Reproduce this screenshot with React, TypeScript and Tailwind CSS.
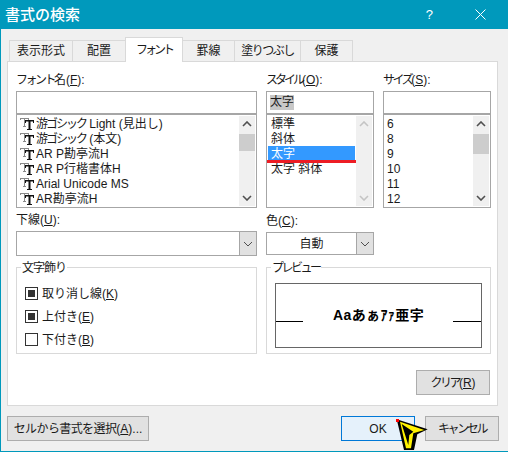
const fonts: [string, string][] = [
  ["游ゴシック", " Light (見出し)"],
  ["游ゴシック", " (本文)"],
  ["", "AR P勘亭流H"],
  ["", "AR P行楷書体H"],
  ["", "Arial Unicode MS"],
  ["", "AR勘亭流H"],
];
const styles = ["標準", "斜体", "太字", "太字 斜体"];
const sizes = ["6", "8", "9", "10", "11", "12"];

const Chevron = ({ down, color = "#505050", thin }: { down?: boolean; color?: string; thin?: boolean }) => (
  <svg width="10" height="6" viewBox="0 0 10 6" fill="none">
    <path d={down ? "M1 1l4 4 4-4" : "M1 5l4-4 4 4"} stroke={color} strokeWidth={thin ? 1 : 1.6} />
  </svg>
);

const FontIcon = () => (
  <svg width="14" height="12" viewBox="0 0 14 12" className="shrink-0">
    <path d="M0 0h9v2H8V1H5v7h1v1H3V8h1V1H1v1H0z" fill="#8a8a8a" />
    <path d="M5 2h9v3h-1V3.5h-2.5V11H12v1H7v-1h1.5V3.5H6V5H5z" fill="#111111" />
  </svg>
);

const Scrollbar = ({ thumb, disabled }: { thumb?: number; disabled?: boolean }) => (
  <div className="absolute right-px top-px bottom-px w-[16px] bg-[#f0f0f0] flex flex-col items-center justify-between py-[5px]">
    <Chevron color={disabled ? "#c4c4c4" : "#505050"} />
    {thumb ? <div className="absolute left-0 right-0 top-[18px] bg-[#cdcdcd]" style={{ height: thumb }} /> : null}
    <Chevron down color={disabled ? "#c4c4c4" : "#505050"} />
  </div>
);

const Tab = ({ w, active, children }: { w: number; active?: boolean; children: React.ReactNode }) => (
  <div
    className={
      active
        ? "relative z-10 -mb-px h-[25px] bg-white border border-b-0 border-[#d9d9d9] -ml-px flex items-center justify-center"
        : "h-[21px] bg-[#f0f0f0] border border-b-0 border-[#d9d9d9] -ml-px flex items-center justify-center"
    }
    style={{ width: w }}
  >
    {children}
  </div>
);

const Check = ({ checked, children }: { checked?: boolean; children: React.ReactNode }) => (
  <div className="flex items-center h-[13px] gap-[4px]">
    <div className="w-[13px] h-[13px] border border-[#333333] bg-white flex items-center justify-center">
      {checked ? <div className="w-[7px] h-[7px] bg-[#333333]" /> : null}
    </div>
    <span className="whitespace-nowrap mt-[2px]">{children}</span>
  </div>
);

const Combo = ({ h, children }: { h: string; children?: React.ReactNode }) => (
  <div className={`${h} border border-[#a6a6a6] bg-white flex`}>
    <div className="flex-1 flex items-center justify-center pt-px">{children}</div>
    <div className="w-[17px] bg-[#e1e1e1] border-l border-[#a6a6a6] flex items-center justify-center">
      <Chevron down thin />
    </div>
  </div>
);

const Btn = ({ w, primary, children }: { w: string; primary?: boolean; children: React.ReactNode }) => (
  <div
    className={`${w} h-[25px] pt-px border flex items-center justify-center ${
      primary ? "bg-[#e5f1fb] border-[#0078d7]" : "bg-[#e1e1e1] border-[#adadad]"
    }`}
  >
    {children}
  </div>
);

const App = () => {
  return (
    <div
      className="relative w-[508px] h-[452px] overflow-hidden bg-[#0099bc] border-l border-b border-[#0099bc] text-[12px] leading-[15px] text-[#1a1a1a]"
      style={{ fontFamily: '"Liberation Sans", "Noto Sans CJK JP", sans-serif' }}
    >
      <div className="h-[29px] flex items-center justify-between text-white">
        <span className="ml-[4px] text-[15px] font-medium">書式の検索</span>
        <div className="flex items-center">
          <span className="text-[13px] mr-[42px]">?</span>
          <svg width="11" height="11" viewBox="0 0 11 11" className="mr-[22px]" fill="none" stroke="#ffffff">
            <path d="M0.5 0.5l10 10M10.5 0.5l-10 10" />
          </svg>
        </div>
      </div>

      <div className="h-[422px] bg-[#f0f0f0] pl-[6px] pt-[8px]">
        <div className="flex items-end h-[24px] pl-[3px]">
          <Tab w={64}>表示形式</Tab>
          <Tab w={54}>配置</Tab>
          <Tab w={58} active><span className="tracking-[-3px]">フォント</span></Tab>
          <Tab w={53}>罫線</Tab>
          <Tab w={67}><span className="tracking-[-1.5px]">塗りつぶし</span></Tab>
          <Tab w={53}>保護</Tab>
        </div>

        <div className="w-[491px] h-[345px] bg-white border border-[#d9d9d9] pl-[8px] pt-[9px]">
          <div className="grid grid-cols-[241px_108px_108px] gap-x-[9px]">
            <label className="h-[20px] leading-[18px]"><span className="tracking-[-2.5px]">フォント</span>名(<span className="underline">F</span>):</label>
            <label className="h-[20px] leading-[18px]"><span className="tracking-[-3px]">スタイル</span>(<span className="underline">O</span>):</label>
            <label className="h-[20px] leading-[18px]"><span className="tracking-[-2.5px]">サイズ</span>(<span className="underline">S</span>):</label>

            <div className="h-[23px] border border-[#a6a6a6]" />
            <div className="h-[23px] border border-[#a6a6a6] flex items-center pl-[3px]">
              <span className="bg-[#c8c8c8]">太字</span>
            </div>
            <div className="h-[23px] border border-[#a6a6a6]" />

            <div className="relative h-[94px] border border-[#a6a6a6] pl-[3px] pt-[1px]">
              {fonts.map(([kana, rest]) => (
                <div key={kana + rest} className="flex items-center h-[15px] gap-[2px] whitespace-pre">
                  <FontIcon />
                  <span className="mt-[2px]">
                    {kana ? <span className="tracking-[-2px]">{kana}</span> : null}
                    {rest}
                  </span>
                </div>
              ))}
              <Scrollbar thumb={17} />
            </div>

            <div className="relative h-[94px] border border-[#a6a6a6] pl-px pt-[1px]">
              {styles.map((s) => (
                <div
                  key={s}
                  className={
                    s === "太字"
                      ? "w-[87px] h-[15px] leading-[17px] pl-[3px] bg-[#3399ff] text-white"
                      : "h-[15px] leading-[17px] pl-[3px]"
                  }
                >
                  {s}
                </div>
              ))}
              <div className="absolute left-0 top-[45px] w-[91px] h-[3px] bg-[#ed1c24]" />
              <Scrollbar disabled />
            </div>

            <div className="relative h-[94px] border border-[#a6a6a6] pl-[3px] pt-[1px]">
              {sizes.map((s) => (
                <div key={s} className="h-[15px] leading-[17px]">{s}</div>
              ))}
              <Scrollbar thumb={20} />
            </div>
          </div>

          <div className="flex gap-x-[9px] mt-[4px]">
            <div className="w-[241px]">
              <label className="block h-[19px] leading-[17px]">下線(<span className="underline">U</span>):</label>
              <Combo h="h-[25px]" />
            </div>
            <div className="w-[108px]">
              <label className="block h-[20px] leading-[18px]">色(<span className="underline">C</span>):</label>
              <Combo h="h-[23px]">自動</Combo>
            </div>
          </div>

          <div className="flex gap-x-[9px] mt-[3px]">
            <fieldset className="w-[241px] h-[95px] border border-[#d9d9d9] pl-[8px] pt-[12px] flex flex-col gap-[10px]">
              <legend className="ml-[-4px] px-px pt-[2px] leading-[14px]"><span className="tracking-[-1px]">文字飾り</span></legend>
              <Check checked>取り消し線(<span className="underline">K</span>)</Check>
              <Check checked>上付き(<span className="underline">E</span>)</Check>
              <Check>下付き(<span className="underline">B</span>)</Check>
            </fieldset>
            <fieldset className="w-[225px] h-[95px] border border-[#d9d9d9] pl-[8px] pt-[8px]">
              <legend className="ml-[-4px] px-px pt-[2px] leading-[14px]"><span className="tracking-[-2.5px]">プレビュー</span></legend>
              <div className="relative w-[207px] h-[65px] border border-[#666666] flex items-center justify-center font-bold text-[14px] text-black">
                <span className="whitespace-nowrap tracking-[0.4px]">Aaあぁｱｧ亜宇</span>
                <div className="absolute left-0 top-[37px] w-[27px] h-px bg-black" />
                <div className="absolute right-0 top-[37px] w-[28px] h-px bg-black" />
              </div>
            </fieldset>
          </div>

          <div className="flex justify-end pr-[7px] mt-[16px]">
            <Btn w="w-[74px]"><span><span className="tracking-[-2.5px]">クリア</span>(<span className="underline">R</span>)</span></Btn>
          </div>
        </div>

        <div className="flex items-center mt-[10px] pr-[9px]">
          <Btn w="w-[142px]"><span className="whitespace-nowrap"><span className="tracking-[-0.6px]">セルから書式を選択</span>(<span className="underline">A</span>)...</span></Btn>
          <div className="flex-1" />
          <Btn w="w-[74px]" primary>OK</Btn>
          <div className="w-[10px]" />
          <Btn w="w-[74px]"><span className="tracking-[-2.4px]">キャンセル</span></Btn>
        </div>
      </div>

      <svg width="36" height="34" viewBox="0 0 36 34" className="absolute left-[391px] top-[418px]">
        <path d="M4.7 1.3L35.7 11.3 25.3 16.3 22 32H12z" fill="#000000" />
        <path d="M8 3.7L32.3 12 21.3 15.3 19 30.3H14z" fill="#fff200" />
        <path d="M9.7 6L21.3 13.7 17.3 17 16.3 27z" fill="#000000" />
        <rect x="4" y="1" width="3" height="3" fill="#ff0000" />
      </svg>
    </div>
  );
};

export default App;
